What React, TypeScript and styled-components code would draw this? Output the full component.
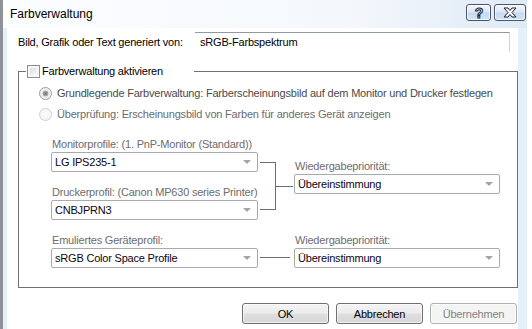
import React, { FC, ReactElement } from 'react'
import styled, { createGlobalStyle } from 'styled-components'

const GlobalStyle = createGlobalStyle`
  html, body {
    margin: 0;
    padding: 0;
    background: #fff;
  }
  body {
    width: 532px;
    height: 329px;
    overflow: hidden;
    font-family: "Liberation Sans", Arial, sans-serif;
    font-size: 11px;
    letter-spacing: -0.2px;
    color: #000;
  }
`

const Window = styled.div`
  width: 524px;
  height: 329px;
  border-left: 3px solid #8f9399;
  background: #e6f0f9;
  display: flex;
  flex-direction: column;
  overflow: hidden;
`

const TitleBar = styled.div`
  height: 28px;
  flex-shrink: 0;
  display: flex;
  align-items: center;
  padding: 0 1px 0 7px;
  background: linear-gradient(to right, #fcfdff, #f4f8fc 65%, #dfeaf6);
`

const Title = styled.div`
  flex: 1;
  font-size: 12px;
  letter-spacing: 0;
  margin-top: -1px;
`

const TitleButtons = styled.div`
  align-self: flex-start;
  margin-top: 4px;
  display: flex;
  gap: 3px;
`

const TitleButton = styled.div<{ $w: number }>`
  width: ${p => p.$w}px;
  height: 17px;
  box-sizing: border-box;
  border: 1px solid #49566a;
  border-radius: 3px;
  background: linear-gradient(#f1f6fc, #dbe7f5 48%, #c6d9ef 52%, #d4e4f5);
  box-shadow: inset 0 0 0 1px rgba(255, 255, 255, 0.7);
  display: flex;
  align-items: center;
  justify-content: center;
`

const Client = styled.div`
  flex: 1;
  margin-left: 4px;
  width: 511px;
  background: #fff;
  padding: 4px 0 0 11px;
  box-sizing: border-box;
`

const SourceRow = styled.div`
  display: flex;
  align-items: center;
  height: 20px;
`

const SourceLabel = styled.div`
  width: 177px;
`

const SourceField = styled.div`
  width: 315px;
  height: 20px;
  box-sizing: border-box;
  border-top: 1px solid #8f9aa8;
  border-right: 1px solid #ccd4dd;
  padding-left: 5px;
  line-height: 19px;
`

const Group = styled.fieldset`
  margin: 12px 0 0 0;
  padding: 0 0 19px 0;
  width: 500px;
  box-sizing: border-box;
  border: 1px solid #707070;
  min-inline-size: 0;
`

const Legend = styled.legend`
  margin-left: 7px;
  padding: 0 0 0 1px;
  width: 168px;
  height: 14px;
  box-sizing: border-box;
  display: flex;
  align-items: center;
`

const CheckBox = styled.span`
  width: 13px;
  height: 13px;
  box-sizing: border-box;
  border: 1px solid #8e8f8f;
  background: linear-gradient(135deg, #d3d5d8, #f2f3f4 70%, #fdfdfd);
  box-shadow: inset 0 0 0 2px #f6f6f6;
  flex-shrink: 0;
`

const CheckLabel = styled.span`
  margin-left: 2px;
`

const RadioList = styled.div`
  padding-left: 20px;
  margin-top: 8px;
  display: flex;
  flex-direction: column;
  gap: 7px;
`

const RadioRow = styled.div`
  display: flex;
  align-items: center;
  height: 14px;
`

const RadioDot = styled.span<{ $checked?: boolean; $faint?: boolean }>`
  width: 13px;
  height: 13px;
  box-sizing: border-box;
  border-radius: 50%;
  border: 1px solid ${p => (p.$faint ? '#cfd1d3' : '#9a9c9e')};
  background: ${p =>
    p.$checked
      ? 'radial-gradient(circle, #7a7c7e 0, #9d9fa1 2.5px, #e8e8e8 3.2px, #f7f7f7 6px)'
      : 'radial-gradient(circle, #fcfcfc, #f1f1f1)'};
  flex-shrink: 0;
`

const RadioLabel = styled.span<{ $faint?: boolean }>`
  margin-left: 5px;
  color: ${p => (p.$faint ? '#6d6d6d' : '#4a4a4a')};
  white-space: nowrap;
`

const ProfileArea = styled.div`
  margin: 16px 0 0 32px;
`

const Section = styled.div<{ $align: string; $gap?: number }>`
  display: flex;
  align-items: ${p => p.$align};
  margin-top: ${p => p.$gap ?? 0}px;
`

const Column = styled.div<{ $w: number; $top?: number }>`
  width: ${p => p.$w}px;
  margin-top: ${p => p.$top ?? 0}px;
  display: flex;
  flex-direction: column;
`

const Field = styled.div<{ $gap?: number }>`
  margin-top: ${p => p.$gap ?? 0}px;
`

const FieldLabel = styled.div`
  height: 14px;
  line-height: 14px;
  padding-left: 1px;
  margin-bottom: 1px;
  color: #6d6d6d;
  white-space: nowrap;
`

const Combo = styled.div`
  height: 20px;
  box-sizing: border-box;
  border: 1px solid #a7abb0;
  border-radius: 2px;
  background: #fff;
  display: flex;
  align-items: center;
  padding: 0 5px 0 3px;
`

const ComboText = styled.span`
  flex: 1;
  color: #0a0514;
`

const ComboArrow = styled.span`
  width: 0;
  height: 0;
  border-left: 4px solid transparent;
  border-right: 4px solid transparent;
  border-top: 4px solid #a3a3a3;
  margin-right: 1px;
`

const Connector = styled.div<{ $w: number }>`
  width: ${p => p.$w}px;
  display: flex;
  align-items: center;
`

const Bracket = styled.div`
  margin: 25px 0 0 2px;
  width: 16px;
  height: 48px;
  box-sizing: border-box;
  border: 1px solid #6d6d6d;
  border-left: none;
`

const Tick = styled.div<{ $w: number; $ml?: number; $mb?: number }>`
  width: ${p => p.$w}px;
  margin-left: ${p => p.$ml ?? 0}px;
  margin-bottom: ${p => p.$mb ?? 0}px;
  border-top: 1px solid #6d6d6d;
  align-self: ${p => (p.$mb ? 'flex-end' : 'auto')};
  margin-top: ${p => (p.$mb ? 0 : 25)}px;
`

const ButtonRow = styled.div`
  display: flex;
  justify-content: flex-end;
  gap: 7px;
  margin-top: 15px;
  padding-right: 1px;
`

const Button = styled.div<{ $disabled?: boolean }>`
  width: 87px;
  height: 21px;
  box-sizing: border-box;
  border: 1px solid ${p => (p.$disabled ? '#adb2b5' : '#707070')};
  border-radius: 3px;
  background: ${p =>
    p.$disabled
      ? '#f4f4f4'
      : 'linear-gradient(#f4f4f4, #ececec 48%, #dfdfdf 52%, #d6d6d6)'};
  box-shadow: inset 0 0 0 1px rgba(255, 255, 255, 0.6);
  color: ${p => (p.$disabled ? '#838383' : '#000')};
  display: flex;
  align-items: center;
  justify-content: center;
`

type ComboProps = {
    value: string
}

const Select: FC<ComboProps> = ({ value }): ReactElement => (
    <Combo>
        <ComboText>{value}</ComboText>
        <ComboArrow />
    </Combo>
)

const App: FC = (): ReactElement => {
    return (
        <>
            <GlobalStyle />
            <Window>
                <TitleBar>
                    <Title>Farbverwaltung</Title>
                    <TitleButtons>
                        <TitleButton $w={25}>
                            <svg width="12" height="14" viewBox="0 0 12 14">
                                <text x="6" y="12" textAnchor="middle" fontFamily="Liberation Sans, Arial, sans-serif"
                                      fontSize="14" fontWeight="bold" fill="#fff" stroke="#1c2430" strokeWidth="1">?</text>
                            </svg>
                        </TitleButton>
                        <TitleButton $w={32}>
                            <svg width="14" height="11" viewBox="0 0 14 11">
                                <path d="M1 1h4l2 2.5 2-2.5h4l-4 4.5 4 4.5h-4l-2-2.5-2 2.5H1l4-4.5z"
                                      fill="#fff" stroke="#1c2430" strokeWidth="1" strokeLinejoin="round" />
                            </svg>
                        </TitleButton>
                    </TitleButtons>
                </TitleBar>
                <Client>
                    <SourceRow>
                        <SourceLabel>Bild, Grafik oder Text generiert von:</SourceLabel>
                        <SourceField>sRGB-Farbspektrum</SourceField>
                    </SourceRow>
                    <Group>
                        <Legend>
                            <CheckBox />
                            <CheckLabel>Farbverwaltung aktivieren</CheckLabel>
                        </Legend>
                        <RadioList>
                            <RadioRow>
                                <RadioDot $checked />
                                <RadioLabel>Grundlegende Farbverwaltung: Farberscheinungsbild auf dem Monitor und Drucker festlegen</RadioLabel>
                            </RadioRow>
                            <RadioRow>
                                <RadioDot $faint />
                                <RadioLabel $faint>Überprüfung: Erscheinungsbild von Farben für anderes Gerät anzeigen</RadioLabel>
                            </RadioRow>
                        </RadioList>
                        <ProfileArea>
                            <Section $align="flex-start">
                                <Column $w={207}>
                                    <Field>
                                        <FieldLabel>Monitorprofile: (1. PnP-Monitor (Standard))</FieldLabel>
                                        <Select value="LG IPS235-1" />
                                    </Field>
                                    <Field $gap={13}>
                                        <FieldLabel>Druckerprofil: (Canon MP630 series Printer)</FieldLabel>
                                        <Select value="CNBJPRN3" />
                                    </Field>
                                </Column>
                                <Connector $w={36}>
                                    <Bracket />
                                    <Tick $w={17} />
                                </Connector>
                                <Column $w={206} $top={22}>
                                    <FieldLabel>Wiedergabepriorität:</FieldLabel>
                                    <Select value="Übereinstimmung" />
                                </Column>
                            </Section>
                            <Section $align="stretch" $gap={13}>
                                <Column $w={207}>
                                    <FieldLabel>Emuliertes Geräteprofil:</FieldLabel>
                                    <Select value="sRGB Color Space Profile" />
                                </Column>
                                <Connector $w={36}>
                                    <Tick $w={30} $ml={2} $mb={10} />
                                </Connector>
                                <Column $w={206}>
                                    <FieldLabel>Wiedergabepriorität:</FieldLabel>
                                    <Select value="Übereinstimmung" />
                                </Column>
                            </Section>
                        </ProfileArea>
                    </Group>
                    <ButtonRow>
                        <Button>OK</Button>
                        <Button>Abbrechen</Button>
                        <Button $disabled>Übernehmen</Button>
                    </ButtonRow>
                </Client>
            </Window>
        </>
    )
}

export default App
